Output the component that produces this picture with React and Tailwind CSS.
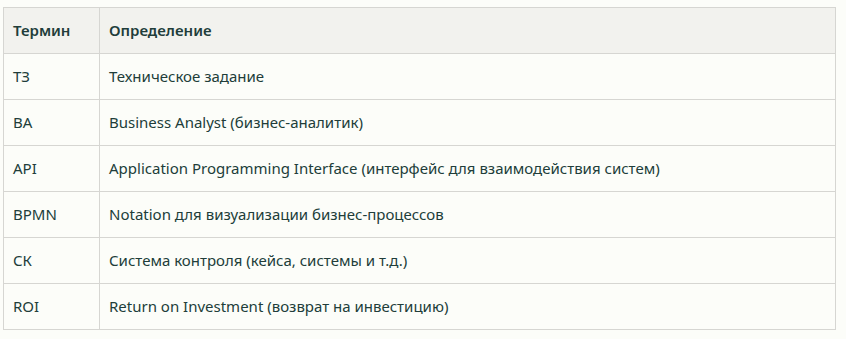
const rows = [
  ["ТЗ", "Техническое задание"],
  ["BA", "Business Analyst (бизнес-аналитик)"],
  ["API", "Application Programming Interface (интерфейс для взаимодействия систем)"],
  ["BPMN", "Notation для визуализации бизнес-процессов"],
  ["СК", "Система контроля (кейса, системы и т.д.)"],
  ["ROI", "Return on Investment (возврат на инвестицию)"],
];

export default function App() {
  return (
    <div className="min-h-screen bg-[#fcfdf9] pl-[3px] pt-[7px] pr-[10px] font-['Noto_Sans',sans-serif] text-[#213d3a]">
      <table className="w-[833px] border-collapse text-[15px]">
        <thead>
          <tr className="h-[46px] bg-[#f2f2ee]">
            <th className="w-[96px] border border-[#d6d6d2] px-[9px] text-left font-semibold">Термин</th>
            <th className="border border-[#d6d6d2] px-[9px] text-left font-semibold">Определение</th>
          </tr>
        </thead>
        <tbody>
          {rows.map(([term, def]) => (
            <tr key={term} className="h-[46px]">
              <td className="border border-[#d6d6d2] px-[9px]">{term}</td>
              <td className="border border-[#d6d6d2] px-[9px]">{def}</td>
            </tr>
          ))}
        </tbody>
      </table>
    </div>
  );
}
